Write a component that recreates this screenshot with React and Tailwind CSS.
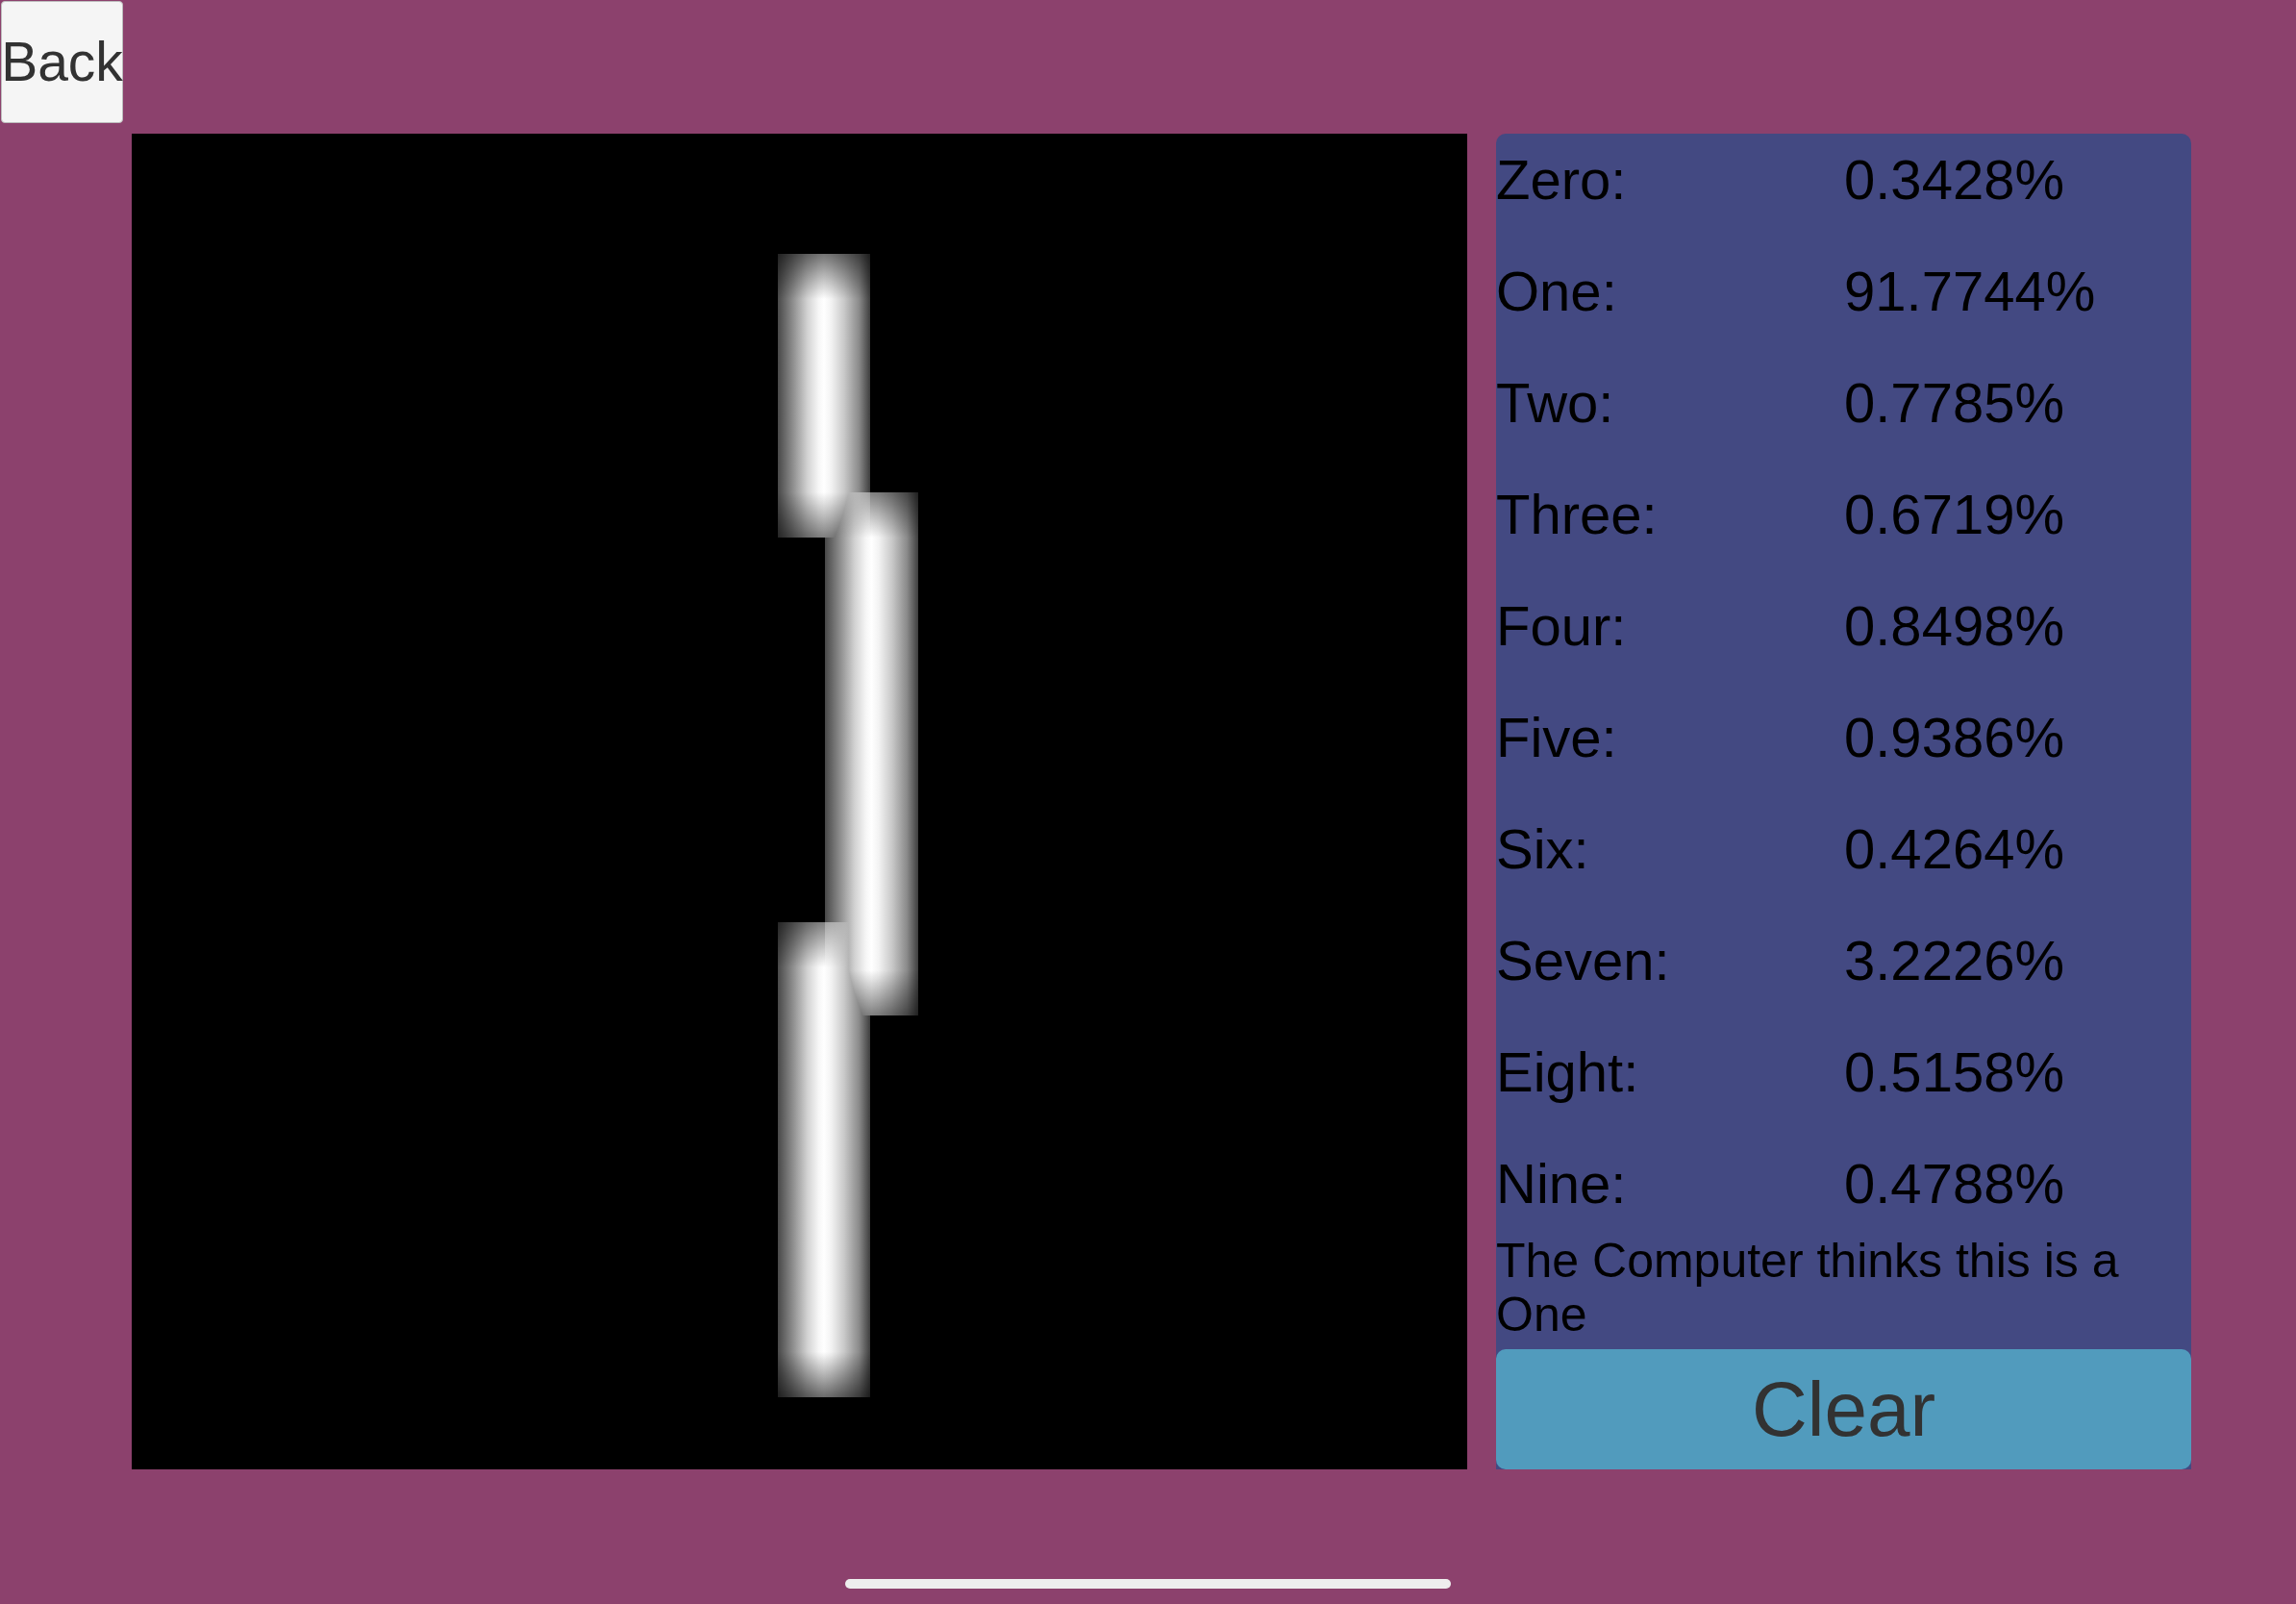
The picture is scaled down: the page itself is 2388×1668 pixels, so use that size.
import React from "react";

const scores = [
  ["Zero:", "0.3428%"],
  ["One:", "91.7744%"],
  ["Two:", "0.7785%"],
  ["Three:", "0.6719%"],
  ["Four:", "0.8498%"],
  ["Five:", "0.9386%"],
  ["Six:", "0.4264%"],
  ["Seven:", "3.2226%"],
  ["Eight:", "0.5158%"],
  ["Nine:", "0.4788%"],
];

// stroke pieces of the drawn digit, in canvas pixels
const strokes = [
  { x: 672, y: 125, w: 96, h: 295, top: 0.45, bottom: 0.5 },
  { x: 721, y: 373, w: 97, h: 544, top: 0.5, bottom: 0.5 },
  { x: 672, y: 820, w: 96, h: 494, top: 0.5, bottom: 0.42 },
];

const FADE = 47;

function DrawCanvas() {
  return (
    <svg
      width="1389"
      height="1389"
      viewBox="0 0 1389 1389"
      className="block shrink-0 bg-black isolate"
    >
      <defs>
        <linearGradient id="glow" x1="0" y1="0" x2="1" y2="0">
          <stop offset="0" stopColor="#484848" />
          <stop offset="0.15" stopColor="#888888" />
          <stop offset="0.32" stopColor="#d2d2d2" />
          <stop offset="0.44" stopColor="#f6f6f6" />
          <stop offset="0.5" stopColor="#ffffff" />
          <stop offset="0.58" stopColor="#f2f2f2" />
          <stop offset="0.72" stopColor="#c8c8c8" />
          <stop offset="0.88" stopColor="#8a8a8a" />
          <stop offset="1" stopColor="#3e3e3e" />
        </linearGradient>
        {strokes.map((s, i) => (
          <linearGradient key={`f${i}`} id={`fade${i}`} x1="0" y1="0" x2="0" y2="1">
            <stop offset="0" stopColor="#fff" stopOpacity={s.top} />
            <stop offset={FADE / s.h} stopColor="#fff" stopOpacity="1" />
            <stop offset={1 - FADE / s.h} stopColor="#fff" stopOpacity="1" />
            <stop offset="1" stopColor="#fff" stopOpacity={s.bottom} />
          </linearGradient>
        ))}
        {strokes.map((s, i) => (
          <mask key={`m${i}`} id={`mask${i}`}>
            <rect x={s.x} y={s.y} width={s.w} height={s.h} fill={`url(#fade${i})`} />
          </mask>
        ))}
      </defs>
      {strokes.map((s, i) => (
        <rect
          key={i}
          x={s.x}
          y={s.y}
          width={s.w}
          height={s.h}
          fill="url(#glow)"
          mask={`url(#mask${i})`}
          className="mix-blend-lighten"
        />
      ))}
    </svg>
  );
}

export default function App() {
  return (
    <div className="relative min-h-[1668px] w-full overflow-hidden bg-[#8c416d] font-['Liberation_Sans',Arial,sans-serif]">
      {/* BACK */}
      <button className="ml-px mt-px flex h-[127px] w-[127px] items-center justify-center whitespace-nowrap rounded-[4px] border border-[#bdbdbd] bg-[#f5f5f5] text-[57px] leading-none text-[#323232]">
        Back
      </button>

      <div className="ml-[137px] mt-[11px] flex gap-[30px]">
        <DrawCanvas />

        {/* RESULTS */}
        <div className="flex h-[1389px] w-[723px] flex-col rounded-t-[10px] bg-[#434982] text-black">
          <div className="flex flex-col gap-[20px]">
            {scores.map(([label, value]) => (
              <div key={label} className="flex h-[96px] text-[58px] leading-[96px]">
                <span className="w-[362px]">{label}</span>
                <span>{value}</span>
              </div>
            ))}
          </div>

          <p className="mt-[4px] text-[50px] leading-[56px]">
            The Computer thinks this is a One
          </p>

          <button className="mt-auto flex h-[125px] w-full items-center justify-center rounded-[10px] bg-[#519bbd] text-[80px] leading-none text-[#323232]">
            Clear
          </button>
        </div>
      </div>

      {/* home indicator */}
      <div className="mx-auto mt-[114px] h-[10px] w-[630px] rounded-full bg-[#eeeeee]" />
    </div>
  );
}
